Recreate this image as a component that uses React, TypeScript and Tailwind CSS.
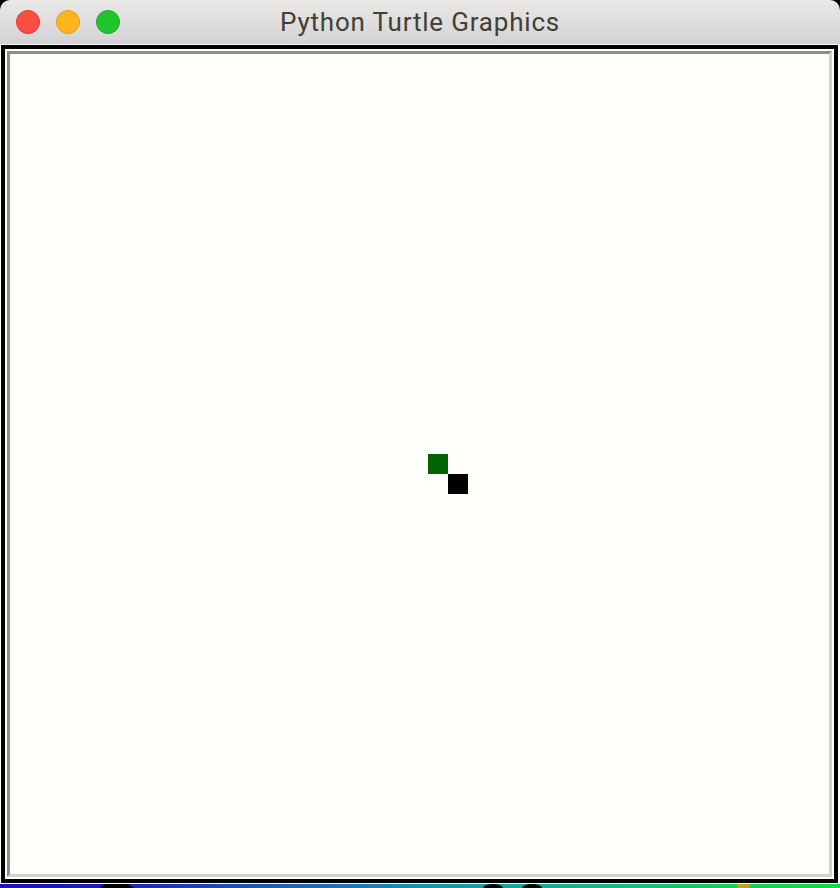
import React from "react"

function TrafficLights() {
  return (
    <div className="flex items-center gap-4">
      <span className="h-6 w-6 rounded-full bg-[#fd4e42] border border-[#e2382c]" />
      <span className="h-6 w-6 rounded-full bg-[#fdb520] border border-[#e09c14]" />
      <span className="h-6 w-6 rounded-full bg-[#22c42c] border border-[#16a81e]" />
    </div>
  )
}

function Wallpaper() {
  return (
    <svg className="block h-1 w-full" viewBox="0 0 840 4" preserveAspectRatio="none">
      <defs>
        <linearGradient id="wp" x1="0" y1="0" x2="1" y2="0">
          <stop offset="0" stopColor="#1a0fbe" />
          <stop offset="0.12" stopColor="#1a1cb8" />
          <stop offset="0.25" stopColor="#1848b0" />
          <stop offset="0.5" stopColor="#1690b0" />
          <stop offset="0.72" stopColor="#14b884" />
          <stop offset="0.88" stopColor="#10d050" />
          <stop offset="1" stopColor="#08e040" />
        </linearGradient>
      </defs>
      <rect x="0" y="0" width="840" height="4" fill="url(#wp)" />
      <path d="M100 4 L104 0 L128 0 L134 4 Z" fill="#000" />
      <ellipse cx="493" cy="4" rx="10" ry="4" fill="#000" />
      <ellipse cx="532" cy="4" rx="10" ry="4" fill="#000" />
      <rect x="737" y="0" width="13" height="4" fill="#c0a020" />
    </svg>
  )
}

export default function App() {
  return (
    <div className="w-[840px] h-[888px] bg-black flex flex-col overflow-hidden">
      {/* title bar */}
      <div className="relative h-[44px] shrink-0 rounded-t-[10px] bg-gradient-to-b from-[#ebe9e6] to-[#d4d2d6] flex items-center px-4">
        <TrafficLights />
        <div
          className="absolute inset-0 flex items-center justify-center text-[26px] tracking-[0.8px] text-[#404034]"
          style={{ fontFamily: "Roboto, 'Noto Sans', sans-serif" }}
        >
          Python Turtle Graphics
        </div>
      </div>

      {/* window body */}
      <div className="flex-1 bg-white pt-[1px] pl-[1px] pr-[2px] pb-[1px] flex flex-col">
        <div className="flex-1 border-[4px] border-black bg-white p-[2px] flex flex-col">
          <div className="flex-1 border-[3px] border-t-[#8f8e82] border-l-[#8f8e82] border-r-[#d2d2ce] border-b-[#d2d2ce] bg-[#fffffc] relative">
            <div className="absolute left-[418px] top-[400px] h-5 w-5 bg-[#006400]" />
            <div className="absolute left-[438px] top-[420px] h-5 w-5 bg-black" />
          </div>
        </div>
      </div>

      <Wallpaper />
    </div>
  )
}
